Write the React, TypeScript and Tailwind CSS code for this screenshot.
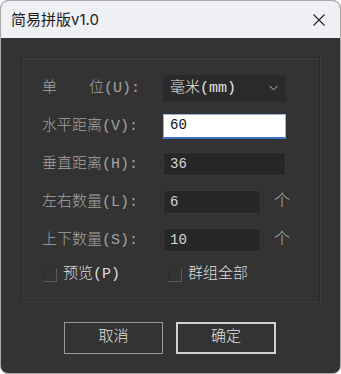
import React from "react";

const mono = { fontFamily: '"Liberation Mono", "Noto Sans CJK SC", monospace' };

function Label({ children }: { children: React.ReactNode }) {
  return (
    <div className="w-[121px] shrink-0 text-[15px] leading-none text-[#a3a3a3] whitespace-pre font-light" style={mono}>
      {children}
    </div>
  );
}

function DarkInput({ value, w }: { value: string; w: string }) {
  return (
    <div
      className={`${w} h-[24px] bg-[#272727] border border-[#383838] rounded-[2px] flex items-center pl-[6px] text-[14px] text-[#d6d6d6]`}
      style={mono}
    >
      {value}
    </div>
  );
}

function Check({ label }: { label: string }) {
  return (
    <div className="flex items-center">
      <div className="w-[14px] h-[14px] border-t border-l border-t-[#2e2e2e] border-l-[#2e2e2e] border-r border-b border-r-[#5a5a5a] border-b-[#5a5a5a] mt-[2px]" />
      <span className="ml-[6px] text-[15px] text-[#dedede] leading-none font-light" style={mono}>
        {label}
      </span>
    </div>
  );
}

export default function App() {
  return (
    <div className="w-[341px] h-[374px] bg-white">
      <div className="w-[341px] h-[374px] rounded-[8px] border border-[#a9a9a9] overflow-hidden flex flex-col bg-[#333333]">
        {/* title bar */}
        <div className="h-[37px] shrink-0 bg-[#eff0f3] flex items-center justify-between pl-[10px] pr-[15px]">
          <span
            className="text-[15px] text-[#1b1b1b] leading-none"
            style={{ fontFamily: '"Inter", "Noto Sans CJK SC", sans-serif' }}
          >
            简易拼版v1.0
          </span>
          <svg width="12" height="12" viewBox="0 0 12 12">
            <path d="M0.5 0.5 L11.5 11.5 M11.5 0.5 L0.5 11.5" stroke="#222" strokeWidth="1.1" />
          </svg>
        </div>
        {/* body */}
        <div className="flex-1 pt-[19px] px-[20px]">
          <div className="h-[244px] border border-[#282828] shadow-[1px_1px_0_#3e3e3e,inset_1px_1px_0_#3e3e3e] pl-[20px] pt-[11px] flex flex-col">
            <div className="h-[38px] flex items-center">
              <Label>
                <span className="flex justify-between w-[98px]">
                  <span>单</span>
                  <span>位(U):</span>
                </span>
              </Label>
              <div className="w-[123px] h-[27px] bg-[#2a2a2a] rounded-[3px] flex items-center justify-between pl-[7px] pr-[8px]">
                <span className="text-[15px] text-[#e4e4e4] leading-none font-light" style={mono}>
                  毫米(mm)
                </span>
                <svg width="9" height="6" viewBox="0 0 9 6">
                  <path d="M0.5 0.8 L4.5 4.8 L8.5 0.8" stroke="#bdbdbd" strokeWidth="1" fill="none" />
                </svg>
              </div>
            </div>
            <div className="h-[38px] flex items-center">
              <Label>水平距离(V):</Label>
              <div
                className="w-[123px] h-[25px] bg-white border border-[#9bb3d4] border-b-2 border-b-[#3d72c4] flex items-center pl-[6px] text-[14px] text-[#111]"
                style={mono}
              >
                60
              </div>
            </div>
            <div className="h-[38px] flex items-center">
              <Label>垂直距离(H):</Label>
              <DarkInput value="36" w="w-[123px]" />
            </div>
            <div className="h-[38px] flex items-center">
              <Label>左右数量(L):</Label>
              <DarkInput value="6" w="w-[98px]" />
              <span className="ml-[13px] text-[16px] text-[#b8b8b8] leading-none font-light" style={mono}>
                个
              </span>
            </div>
            <div className="h-[38px] flex items-center">
              <Label>上下数量(S):</Label>
              <DarkInput value="10" w="w-[98px]" />
              <span className="ml-[13px] text-[16px] text-[#b8b8b8] leading-none font-light" style={mono}>
                个
              </span>
            </div>
            <div className="h-[30px] flex items-center">
              <div className="w-[126px] pl-[1px]">
                <Check label="预览(P)" />
              </div>
              <Check label="群组全部" />
            </div>
          </div>
          <div className="flex pt-[21px] pl-[43px] gap-[13px]">
            <div
              className="w-[99px] h-[32px] border border-[#9a9a9a] flex items-center justify-center text-[15px] text-[#e2e2e2] font-light"
              style={mono}
            >
              取消
            </div>
            <div
              className="w-[100px] h-[32px] border-2 border-[#d2d2d2] flex items-center justify-center text-[15px] text-[#e2e2e2] font-light"
              style={mono}
            >
              确定
            </div>
          </div>
        </div>
      </div>
    </div>
  );
}
